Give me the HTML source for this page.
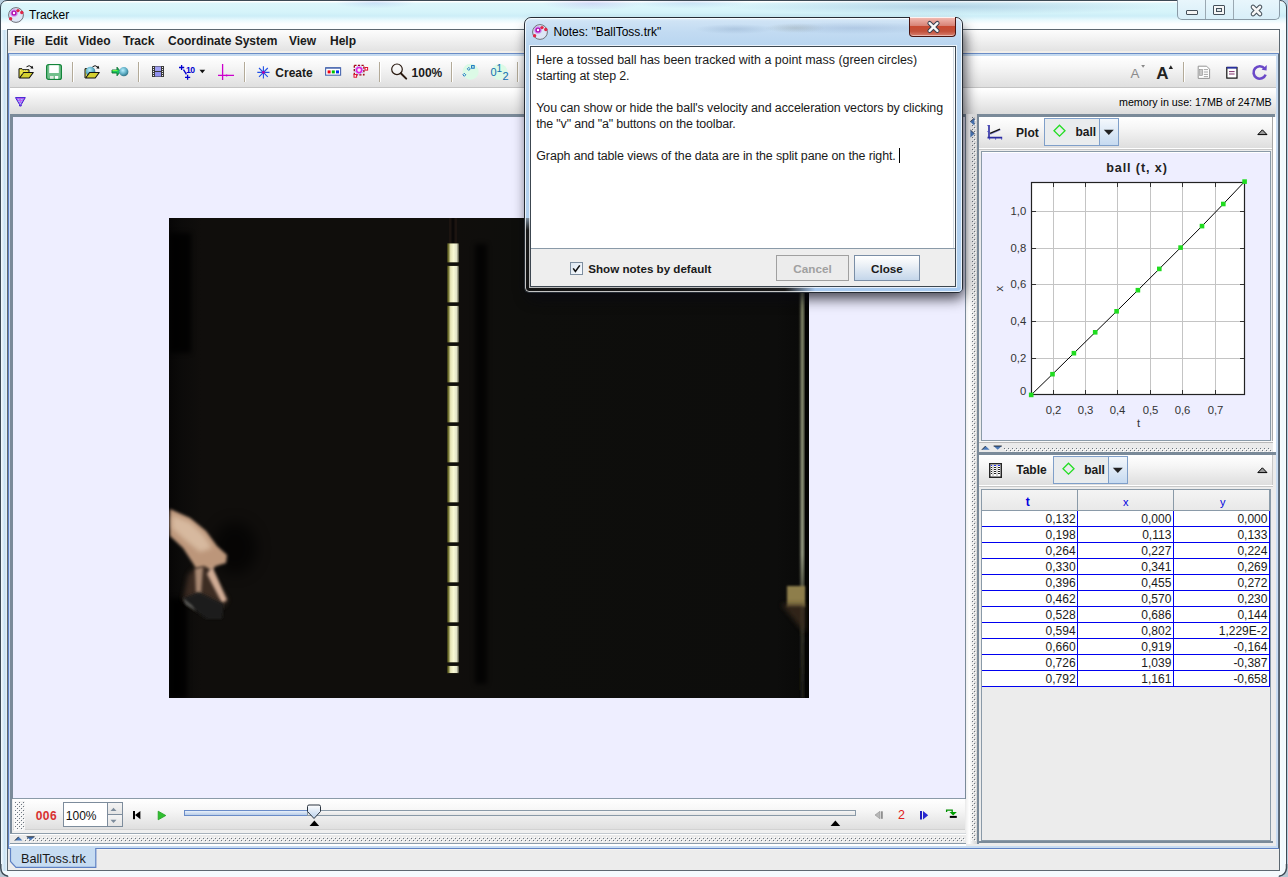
<!DOCTYPE html><html><head><meta charset="utf-8"><style>
*{margin:0;padding:0;box-sizing:border-box}
html,body{width:1288px;height:877px;overflow:hidden;background:#b8cfe0;font-family:"Liberation Sans",sans-serif;color:#000}
.a{position:absolute}
.t{position:absolute;white-space:pre;line-height:1}
svg{overflow:visible}
</style></head><body><div class="a" style="left:0px;top:0px;width:1287px;height:885px;border:1px solid #3d4a55;border-radius:7px 7px 0 0;background:linear-gradient(180deg,#ffffff 0,#ffffff 1px,#dcf6fb 2px,#d6f4fa 11px,#cdeef8 15px,#e8f9fd 19px,#fcfeff 23px,#f8fdff 60px,#eef8fc 100%)"></div>
<div class="a" style="left:1px;top:30px;width:6px;height:845px;background:linear-gradient(90deg,#f4fbff,#c9e2f3 60%,#e6f3fb)"></div>
<div class="a" style="left:1280px;top:30px;width:6px;height:845px;background:linear-gradient(90deg,#fafdff,#eef8fd 50%,#fafdff)"></div>
<div class="a" style="left:1px;top:871px;width:1285px;height:6px;background:#f4fafd"></div>
<div class="a" style="left:200px;top:1px;width:700px;height:8px;background:radial-gradient(ellipse 40px 6px at 25% 20%,rgba(140,160,230,.25),rgba(0,0,0,0)),radial-gradient(ellipse 50px 7px at 56% 30%,rgba(170,140,230,.25),rgba(0,0,0,0)),radial-gradient(ellipse 60px 6px at 70% 20%,rgba(120,150,220,.2),rgba(0,0,0,0))"></div>
<div class="a" style="left:720px;top:1px;width:450px;height:16px;background:radial-gradient(ellipse 220px 8px at 50% 35%,rgba(120,160,200,.38),rgba(120,160,200,0))"></div>
<svg class="a" style="left:8px;top:7px;" width="17" height="17" viewBox="0 0 17 17"><circle cx="8" cy="8" r="7.4" fill="#dde6f6" stroke="#707078" stroke-width="1"/><circle cx="6" cy="6" r="3.8" fill="#c850f0" opacity="0.55"/><circle cx="6" cy="6" r="2.6" fill="#b010b0"/><circle cx="6" cy="6" r="1.2" fill="#fff"/><circle cx="10" cy="3.6" r="1.7" fill="#e02848"/><circle cx="13.8" cy="5.5" r="1.7" fill="#e02848"/><circle cx="2.6" cy="11.7" r="1.7" fill="#e02848"/></svg>
<div class="t" style="left:29px;top:8.74px;font-size:12px;font-weight:normal;color:#000;">Tracker</div>
<div class="a" style="left:1177px;top:0;width:103px;height:20px;border:1px solid #8a9aa6;border-top:none;border-radius:0 0 5px 5px;background:linear-gradient(#e8f6fc,#d8eef8)"></div>
<div class="a" style="left:1205px;top:0px;width:1px;height:19px;background:#9aa8b2"></div>
<div class="a" style="left:1233px;top:0px;width:1px;height:19px;background:#9aa8b2"></div>
<div class="a" style="left:1186px;top:10px;width:12px;height:5px;border:1px solid #45505a;border-radius:1px;background:#f4f4f4"></div>
<div class="a" style="left:1213px;top:5px;width:12px;height:10px;border:1px solid #45505a;border-radius:1px;background:#f6f6f6"></div>
<div class="a" style="left:1216px;top:8px;width:6px;height:4px;border:1px solid #45505a;background:#dfe6ea"></div>
<svg class="a" style="left:1250px;top:5px;" width="13" height="11" viewBox="0 0 13 11"><path d="M3 2 L10 9 M10 2 L3 9" stroke="#45505a" stroke-width="4.6" stroke-linecap="round"/><path d="M3 2 L10 9 M10 2 L3 9" stroke="#f6f6f6" stroke-width="2.6" stroke-linecap="round"/></svg>
<svg class="a" style="left:0px;top:864px;" width="9" height="13" viewBox="0 0 9 13"><path d="M0 0 V13 H9 V12 Q1.5 12 1 4 V0 Z" fill="#b8c8d4"/><path d="M0.8 0 V4 Q1 11 8 12.2" fill="none" stroke="#3d4a55" stroke-width="1.5"/></svg>
<svg class="a" style="left:1278px;top:864px;" width="10" height="13" viewBox="0 0 10 13"><path d="M10 0 V13 H0 V12 Q7.5 12 8.2 4 V0 Z" fill="#b8c8d4"/><path d="M8.5 0 V4 Q8 11 1 12.2" fill="none" stroke="#3d4a55" stroke-width="1.5"/></svg>
<div class="a" style="left:7px;top:29px;width:1273px;height:842px;border:1px solid #5c6770;background:#ececec"></div>
<div class="a" style="left:8px;top:30px;width:1271px;height:21px;background:linear-gradient(#fdfdfd,#f3f3f3 40%,#e3e3e3)"></div>
<div class="a" style="left:8px;top:51px;width:1271px;height:2px;background:#f2efea"></div>
<div class="a" style="left:8px;top:53px;width:1271px;height:1px;background:#6a8cc6"></div>
<div class="t" style="left:14px;top:34.74px;font-size:12px;font-weight:bold;color:#1a1a1a;">File</div>
<div class="t" style="left:45px;top:34.74px;font-size:12px;font-weight:bold;color:#1a1a1a;">Edit</div>
<div class="t" style="left:78px;top:34.74px;font-size:12px;font-weight:bold;color:#1a1a1a;">Video</div>
<div class="t" style="left:123px;top:34.74px;font-size:12px;font-weight:bold;color:#1a1a1a;">Track</div>
<div class="t" style="left:168px;top:34.74px;font-size:12px;font-weight:bold;color:#1a1a1a;">Coordinate System</div>
<div class="t" style="left:289px;top:34.74px;font-size:12px;font-weight:bold;color:#1a1a1a;">View</div>
<div class="t" style="left:330px;top:34.74px;font-size:12px;font-weight:bold;color:#1a1a1a;">Help</div>
<div class="a" style="left:8px;top:54px;width:1271px;height:2px;background:#c6dbf0"></div>
<div class="a" style="left:8px;top:56px;width:1271px;height:31px;background:linear-gradient(#ffffff,#f6f6f6 35%,#dfdfdf)"></div>
<div class="a" style="left:8px;top:87px;width:1271px;height:1px;background:#c4c4c4"></div>
<div class="a" style="left:8px;top:88px;width:1271px;height:1px;background:#ffffff"></div>
<div class="a" style="left:8px;top:89px;width:1271px;height:25px;background:linear-gradient(#ffffff,#f1f1f1 40%,#dcdcdc)"></div>
<div class="t" style="left:1119px;top:97.14px;font-size:10.7px;font-weight:normal;color:#000;">memory in use: 17MB of 247MB</div>
<svg class="a" style="left:15px;top:97px;" width="11" height="10" viewBox="0 0 11 10"><path d="M0.5 0.6 H10.3 L6.2 7.6 V9 H4.6 V7.6 Z" fill="#c060f0" stroke="#3a20d0" stroke-width="1"/><path d="M3 2.5 H4 M6 2.5 H7.5 M3.5 4.5 H4.8 M6.2 4.5 H7 M4.8 6.5 H6" stroke="#80d8ff" stroke-width="1"/></svg>
<div class="a" style="left:72px;top:62px;width:1px;height:20px;background:#b3aa98"></div>
<div class="a" style="left:73px;top:62px;width:1px;height:20px;background:#ffffff"></div>
<div class="a" style="left:138px;top:62px;width:1px;height:20px;background:#b3aa98"></div>
<div class="a" style="left:139px;top:62px;width:1px;height:20px;background:#ffffff"></div>
<div class="a" style="left:244px;top:62px;width:1px;height:20px;background:#b3aa98"></div>
<div class="a" style="left:245px;top:62px;width:1px;height:20px;background:#ffffff"></div>
<div class="a" style="left:379px;top:62px;width:1px;height:20px;background:#b3aa98"></div>
<div class="a" style="left:380px;top:62px;width:1px;height:20px;background:#ffffff"></div>
<div class="a" style="left:451px;top:62px;width:1px;height:20px;background:#b3aa98"></div>
<div class="a" style="left:452px;top:62px;width:1px;height:20px;background:#ffffff"></div>
<div class="a" style="left:517px;top:62px;width:1px;height:20px;background:#b3aa98"></div>
<div class="a" style="left:518px;top:62px;width:1px;height:20px;background:#ffffff"></div>
<div class="a" style="left:1183px;top:62px;width:1px;height:20px;background:#b3aa98"></div>
<div class="a" style="left:1184px;top:62px;width:1px;height:20px;background:#ffffff"></div>
<svg class="a" style="left:18px;top:65px;" width="17" height="14" viewBox="0 0 17 14"><g transform="translate(0,2.5)"><path d="M1 10.5 V1.2 H4 L4.8 2.2 H11 V5" fill="#e8e040" stroke="#111" stroke-width="1"/><path d="M1.6 10.5 L5.6 5 H15.3 L11.2 10.5 Z" fill="#d4d030" stroke="#111" stroke-width="1.1" stroke-linejoin="round"/><path d="M2 2.5 l1 1 m0.5 1.5 l1 1 M6 3 h1 m1 0 h1" stroke="#fff8a0" stroke-width="0.6"/></g><path d="M8.5 1.8 Q11 -0.6 14 2.2" fill="none" stroke="#111" stroke-width="1"/><path d="M12.2 3.2 L15.3 3.8 L14.6 0.8 Z" fill="#111"/></svg>
<svg class="a" style="left:46px;top:64px;" width="16" height="16" viewBox="0 0 16 16"><rect x="0.6" y="0.6" width="14.8" height="14.8" rx="2" fill="#72c08c" stroke="#13843a" stroke-width="1.2"/><rect x="3.2" y="1.2" width="9.6" height="7.8" fill="#fff"/><rect x="4" y="12" width="3.6" height="2.8" fill="#e0e8e0"/><rect x="9" y="12" width="3.2" height="2.8" fill="#fff"/></svg>
<svg class="a" style="left:84px;top:65px;" width="17" height="14" viewBox="0 0 17 14"><g transform="translate(0,2.5)"><path d="M1 10.5 V1.2 H4 V5" fill="#e8e040" stroke="#111" stroke-width="1"/></g><defs><radialGradient id="sph" cx="0.4" cy="0.35" r="0.7"><stop offset="0" stop-color="#b8f0ff"/><stop offset="0.6" stop-color="#58a8c0"/><stop offset="1" stop-color="#2a6878"/></radialGradient></defs><circle cx="6.5" cy="6.5" r="4.8" fill="url(#sph)"/><g transform="translate(0,2.5)"><path d="M1.6 10.5 L5.6 5 H15.3 L11.2 10.5 Z" fill="#d4d030" stroke="#111" stroke-width="1.1" stroke-linejoin="round"/></g><path d="M8.5 1.8 Q11 -0.6 14 2.2" fill="none" stroke="#111" stroke-width="1"/><path d="M12.2 3.2 L15.3 3.8 L14.6 0.8 Z" fill="#111"/></svg>
<svg class="a" style="left:111px;top:66px;" width="18" height="12" viewBox="0 0 18 12"><path d="M1 4 H6 V1.2 L9.5 5.5 L6 9.8 V7 H1 Z" fill="#18c060" stroke="#0a7030" stroke-width="0.9"/><path d="M1.5 4.6 H6.5" stroke="#80ff40" stroke-width="1"/><circle cx="12.8" cy="5.7" r="4.6" fill="url(#sph)"/></svg>
<svg class="a" style="left:152px;top:66px;" width="13" height="12" viewBox="0 0 13 12"><rect x="0" y="0" width="12" height="11" fill="#3a3a3a"/><rect x="3" y="0.5" width="6" height="4.5" fill="#a0a0f4"/><rect x="3" y="6" width="6" height="4.5" fill="#9090ee"/><rect x="1" y="1" width="1" height="1" fill="#f0f0f0"/><rect x="10" y="1" width="1" height="1" fill="#f0f0f0"/><rect x="1" y="3" width="1" height="1" fill="#f0f0f0"/><rect x="10" y="3" width="1" height="1" fill="#f0f0f0"/><rect x="1" y="5" width="1" height="1" fill="#f0f0f0"/><rect x="10" y="5" width="1" height="1" fill="#f0f0f0"/><rect x="1" y="7" width="1" height="1" fill="#f0f0f0"/><rect x="10" y="7" width="1" height="1" fill="#f0f0f0"/><rect x="1" y="9" width="1" height="1" fill="#f0f0f0"/><rect x="10" y="9" width="1" height="1" fill="#f0f0f0"/></svg>
<svg class="a" style="left:178px;top:64px;" width="17" height="16" viewBox="0 0 17 16"><path d="M1 3.5 H6.2 M3.6 1 V6 M7 13.3 H12.2 M9.6 10.8 V15.8 M5.5 5.6 L8.4 10.4" stroke="#0000d0" stroke-width="1.3"/><text x="8" y="9.2" font-family="Liberation Sans" font-size="8.6" font-weight="bold" fill="#0000d0" letter-spacing="-0.6">10</text></svg>
<svg class="a" style="left:199px;top:69px;" width="7" height="5" viewBox="0 0 7 5"><path d="M0.5 0.8 H6.2 L3.35 4.2 Z" fill="#111"/></svg>
<svg class="a" style="left:217px;top:63px;" width="18" height="18" viewBox="0 0 18 18"><path d="M5.6 1 V17 M1 12.4 H17" stroke="#cc00cc" stroke-width="1.3"/><circle cx="9.6" cy="12.4" r="1" fill="#cc00cc"/></svg>
<svg class="a" style="left:257px;top:66px;" width="13" height="13" viewBox="0 0 13 13"><path d="M6.4 0.3 V12.5 M0.3 6.4 H12.5 M2 2 L10.8 10.8 M10.8 2 L2 10.8" stroke="#2050e8" stroke-width="1.1"/><circle cx="6.4" cy="6.4" r="1.4" fill="#c000a0"/></svg>
<div class="t" style="left:275.3px;top:66.54px;font-size:12px;font-weight:bold;color:#1a1a1a;">Create</div>
<svg class="a" style="left:325px;top:67px;" width="17" height="9" viewBox="0 0 17 9"><rect x="0.6" y="0.8" width="15" height="7.4" fill="#fff" stroke="#4a68b0" stroke-width="1.1"/><rect x="0.6" y="0.3" width="15" height="1.3" fill="#4a68b0"/><rect x="2.6" y="3.4" width="3" height="3" fill="#f00010"/><rect x="6.8" y="3.4" width="3" height="3" fill="#00c000"/><rect x="11" y="3.4" width="3" height="3" fill="#0030f0"/></svg>
<svg class="a" style="left:353px;top:64px;" width="16" height="14" viewBox="0 0 16 14"><rect x="1.3" y="1.3" width="9.6" height="9.6" fill="none" stroke="#a00010" stroke-width="1.3" stroke-dasharray="2.2 1.4"/><circle cx="6.1" cy="6.1" r="2.6" fill="none" stroke="#e020e0" stroke-width="1.6"/><circle cx="6.1" cy="6.1" r="4" fill="none" stroke="#6040f0" stroke-width="0.6" stroke-dasharray="1 1"/><rect x="12" y="3.5" width="2.6" height="2.6" fill="#fff" stroke="#e01030" stroke-width="1"/><rect x="1" y="10.6" width="2.6" height="2.6" fill="#fff" stroke="#e01030" stroke-width="1"/></svg>
<svg class="a" style="left:390px;top:63px;" width="18" height="18" viewBox="0 0 18 18"><circle cx="7" cy="6.3" r="5.3" fill="#fff" fill-opacity="0.2" stroke="#2a1a10" stroke-width="1.2"/><path d="M10.8 10.2 L16.2 15.6" stroke="#2a1a10" stroke-width="2" stroke-linecap="round"/></svg>
<div class="t" style="left:411.6px;top:67.24px;font-size:12px;font-weight:bold;color:#1a1a1a;">100%</div>
<svg class="a" style="left:462px;top:63px;" width="18" height="18" viewBox="0 0 18 18"><circle cx="8.6" cy="8.7" r="8" fill="#dcfae6"/><path d="M2.3 10.3 L3.8 11.8 L2.3 13.3 L0.8 11.8 Z M6.8 4.4 L8.3 5.9 L6.8 7.4 L5.3 5.9 Z" fill="none" stroke="#1070c0" stroke-width="0.9"/><rect x="9.6" y="2.6" width="2.6" height="2.6" fill="none" stroke="#1070c0" stroke-width="1"/></svg>
<svg class="a" style="left:489px;top:63px;" width="20" height="18" viewBox="0 0 20 18"><circle cx="10.5" cy="9" r="8" fill="#dcfae6"/><text x="1.5" y="13.3" font-family="Liberation Sans" font-size="11" fill="#1070b0">0</text><text x="7.6" y="8.6" font-family="Liberation Sans" font-size="10" fill="#1070b0">1</text><text x="13.6" y="16.6" font-family="Liberation Sans" font-size="11" fill="#1070b0">2</text></svg>
<svg class="a" style="left:1130px;top:64px;" width="16" height="16" viewBox="0 0 16 16"><text x="0.6" y="14.1" font-family="Liberation Sans" font-size="13.4" fill="#8a8a8a">A</text><path d="M11.2 1 H15 L13.1 3.8 Z" fill="#888"/></svg>
<svg class="a" style="left:1156px;top:64px;" width="18" height="16" viewBox="0 0 18 16"><text x="0.2" y="14.6" font-family="Liberation Sans" font-size="17" font-weight="bold" fill="#222">A</text><path d="M12.6 5 H17 L14.8 1.2 Z" fill="#222"/></svg>
<svg class="a" style="left:1197px;top:65px;" width="14" height="15" viewBox="0 0 14 15"><path d="M1.2 1.2 H9.6 L12.6 4.2 V13.4 H1.2 Z" fill="#fff" stroke="#8a8a8a" stroke-width="0.9"/><rect x="2.6" y="4.4" width="3" height="6" fill="#c8c8c8" stroke="#909090" stroke-width="0.6"/><path d="M6.8 4.6 H11 M6.8 7 H11 M6.8 9.4 H11 M6.8 11.6 H11" stroke="#909090" stroke-width="0.8"/></svg>
<svg class="a" style="left:1226px;top:66px;" width="12" height="13" viewBox="0 0 12 13"><rect x="0.8" y="1.5" width="10.2" height="10.6" fill="#fff" stroke="#111" stroke-width="1.2"/><rect x="0.8" y="0.8" width="10.2" height="1.8" fill="#2830a0"/><path d="M3 5.6 H8.6 M3 8 H8.6" stroke="#80306a" stroke-width="1"/></svg>
<svg class="a" style="left:1251px;top:64px;" width="18" height="17" viewBox="0 0 18 17"><path d="M13.6 4.6 A6.2 6.2 0 1 0 14.6 10.6" fill="none" stroke="#6a48c8" stroke-width="2.6"/><path d="M10.6 5.8 L15.6 6.4 L15.8 1 Z" fill="#6a48c8"/></svg>
<div class="a" style="left:10px;top:114px;width:956px;height:685px;background:#eeeeff"></div>
<div class="a" style="left:10px;top:114px;width:956px;height:3px;background:#7a8a99"></div>
<div class="a" style="left:10px;top:114px;width:3px;height:685px;background:#7a8a99"></div>
<div class="a" style="left:10px;top:798px;width:2px;height:36px;background:#7a8a99"></div>
<div class="a" style="left:965px;top:114px;width:1px;height:685px;background:#7a8a99"></div>
<svg class="a" style="left:169px;top:218px;overflow:hidden" width="640" height="480" viewBox="0 0 640 480"><g><defs><filter id="bl1" x="-50%" y="-50%" width="200%" height="200%"><feGaussianBlur stdDeviation="1.2"/></filter><filter id="bl2" x="-50%" y="-50%" width="200%" height="200%"><feGaussianBlur stdDeviation="2.5"/></filter><filter id="bl6" x="-50%" y="-50%" width="200%" height="200%"><feGaussianBlur stdDeviation="7"/></filter><linearGradient id="vbg" x1="0" y1="0" x2="1" y2="0"><stop offset="0" stop-color="#070606"/><stop offset="0.02" stop-color="#0c0b0a"/><stop offset="0.05" stop-color="#100e0c"/><stop offset="0.45" stop-color="#100e0c"/><stop offset="0.55" stop-color="#0e0e0c"/><stop offset="0.95" stop-color="#0d0d0c"/><stop offset="1" stop-color="#090908"/></linearGradient><linearGradient id="stk" x1="0" y1="0" x2="1" y2="0"><stop offset="0" stop-color="#2e2e10"/><stop offset="0.12" stop-color="#70702e"/><stop offset="0.3" stop-color="#e6e4b8"/><stop offset="0.55" stop-color="#f8f8d4"/><stop offset="0.8" stop-color="#e2e2c8"/><stop offset="1" stop-color="#4a4a3a"/></linearGradient></defs><rect x="0" y="0" width="640" height="480" fill="url(#vbg)"/><rect x="0" y="15" width="22" height="120" fill="#040404" opacity="0.8" filter="url(#bl2)"/><rect x="0" y="380" width="18" height="100" fill="#050505" opacity="0.9" filter="url(#bl2)"/><rect x="306" y="26" width="12" height="440" fill="#050505" opacity="0.75" filter="url(#bl2)"/><rect x="280" y="0" width="8" height="26" fill="#1c1410"/><rect x="282.5" y="0" width="3" height="26" fill="#0a0808"/><rect x="278" y="25.0" width="12" height="19.7" fill="#2a2818"/><rect x="278" y="25.5" width="12" height="18.7" rx="1" fill="url(#stk)"/><rect x="278" y="47.5" width="12" height="37.2" fill="#2a2818"/><rect x="278" y="48.0" width="12" height="36.2" rx="1" fill="url(#stk)"/><rect x="278" y="87.5" width="12" height="37.2" fill="#2a2818"/><rect x="278" y="88.0" width="12" height="36.2" rx="1" fill="url(#stk)"/><rect x="278" y="127.5" width="12" height="37.2" fill="#2a2818"/><rect x="278" y="128.0" width="12" height="36.2" rx="1" fill="url(#stk)"/><rect x="278" y="167.5" width="12" height="37.2" fill="#2a2818"/><rect x="278" y="168.0" width="12" height="36.2" rx="1" fill="url(#stk)"/><rect x="278" y="207.5" width="12" height="37.2" fill="#2a2818"/><rect x="278" y="208.0" width="12" height="36.2" rx="1" fill="url(#stk)"/><rect x="278" y="247.5" width="12" height="37.2" fill="#2a2818"/><rect x="278" y="248.0" width="12" height="36.2" rx="1" fill="url(#stk)"/><rect x="278" y="287.5" width="12" height="37.2" fill="#2a2818"/><rect x="278" y="288.0" width="12" height="36.2" rx="1" fill="url(#stk)"/><rect x="278" y="327.5" width="12" height="37.2" fill="#2a2818"/><rect x="278" y="328.0" width="12" height="36.2" rx="1" fill="url(#stk)"/><rect x="278" y="367.5" width="12" height="37.2" fill="#2a2818"/><rect x="278" y="368.0" width="12" height="36.2" rx="1" fill="url(#stk)"/><rect x="278" y="407.5" width="12" height="37.2" fill="#2a2818"/><rect x="278" y="408.0" width="12" height="36.2" rx="1" fill="url(#stk)"/><rect x="278" y="447.5" width="12" height="8.0" fill="#2a2818"/><rect x="278" y="448.0" width="12" height="7.0" rx="1" fill="url(#stk)"/><linearGradient id="rl" x1="0" y1="0" x2="0" y2="1"><stop offset="0" stop-color="#4a4a34"/><stop offset="0.15" stop-color="#7c8062"/><stop offset="0.7" stop-color="#9aa086"/><stop offset="0.8" stop-color="#3a3a2c"/><stop offset="1" stop-color="#1a1a16"/></linearGradient><rect x="631.5" y="0" width="3.6" height="480" fill="url(#rl)" filter="url(#bl1)"/><rect x="636" y="0" width="4" height="480" fill="#040403"/><rect x="618" y="368" width="18" height="21" fill="#8e7e4c" filter="url(#bl1)"/><path d="M612 386 L636 386 L636 415 Z" fill="#3a2c1c" opacity="0.8" filter="url(#bl2)"/><ellipse cx="66" cy="330" rx="22" ry="26" fill="#000" opacity="0.6" filter="url(#bl6)"/><filter id="bh" x="-50%" y="-50%" width="200%" height="200%"><feGaussianBlur stdDeviation="1.8"/></filter><path d="M34.0 342.0 L59.0 382.0 L55.0 388.0 L31.0 392.0 L14.0 382.0 L19.0 357.0 Z" fill="#5a4030" opacity="0.6" filter="url(#bl2)"/><path d="M1.0 291.0 L21.0 300.0 L37.0 313.0 L48.0 328.0 L58.0 337.0 L57.0 345.0 L47.0 348.0 L42.0 352.0 L35.0 348.0 L27.0 350.0 L14.0 330.0 L1.0 318.0 Z" fill="#bc967a" filter="url(#bh)"/><path d="M3.0 297.0 L21.0 304.0 L35.0 317.0 L43.0 330.0 L31.0 334.0 L16.0 322.0 L3.0 310.0 Z" fill="#dcc0a6" opacity="0.85" filter="url(#bl2)"/><path d="M43.0 348.0 L58.0 382.0 L53.0 385.0 L38.0 356.0 Z" fill="#d0ac94" filter="url(#bh)"/><path d="M34.0 349.0 L32.0 376.0 L27.0 375.0 L26.0 351.0 Z" fill="#a88872" filter="url(#bh)"/><path d="M14.0 380.0 L30.0 374.0 L55.0 386.0 L53.0 401.0 L38.0 401.0 L15.0 385.0 Z" fill="#1e1e1c" filter="url(#bh)"/><path d="M14.0 380.0 L23.0 387.0 L27.0 393.0 L17.0 387.0 Z" fill="#7a7a76" opacity="0.6" filter="url(#bl1)"/></g></svg>
<div class="a" style="left:13px;top:799px;width:952px;height:30px;background:linear-gradient(#ffffff,#f7f7f7 35%,#dfdfdf)"></div>
<div class="a" style="left:13px;top:798px;width:952px;height:1px;background:#8a9aa8"></div>
<div class="a" style="left:13px;top:829px;width:952px;height:1px;background:#d2d2d2"></div>
<div class="a" style="left:13px;top:830px;width:952px;height:3px;background:#f0f0f0"></div>
<div class="a" style="left:10px;top:833px;width:956px;height:1px;background:linear-gradient(90deg,#8a9aa8,#b4bcc4 30%,#d4d8dc)"></div>
<div class="a" style="left:10px;top:834px;width:956px;height:1px;background:#ffffff"></div>
<div class="a" style="left:14px;top:801px;width:11px;height:30px;background:linear-gradient(90deg,#fafafa,#f0f0f0)"></div>
<svg class="a" style="left:15px;top:802px" width="10" height="28"><defs><pattern id="dp1" x="0" y="0" width="4" height="4" patternUnits="userSpaceOnUse"><rect x="1" y="1" width="1" height="1" fill="#fff"/><rect x="3" y="3" width="1" height="1" fill="#fff"/><rect x="0" y="0" width="1" height="1" fill="#6a747e"/><rect x="2" y="2" width="1" height="1" fill="#6a747e"/></pattern></defs><rect width="10" height="28" fill="url(#dp1)"/></svg>
<div class="t" style="left:35.7px;top:810.44px;font-size:12px;font-weight:bold;color:#d83030;letter-spacing:0.45px">006</div>
<div class="a" style="left:63px;top:802px;width:45px;height:25px;background:#fff;border:1px solid #7d8c9c"></div>
<div class="t" style="left:65.8px;top:809.74px;font-size:12px;font-weight:normal;color:#111;">100%</div>
<div class="a" style="left:107px;top:802px;width:16px;height:13px;background:linear-gradient(#f4f4f4,#e4e4e4);border:1px solid #7d8c9c"></div>
<div class="a" style="left:107px;top:814px;width:16px;height:13px;background:linear-gradient(#f4f4f4,#e4e4e4);border:1px solid #7d8c9c"></div>
<svg class="a" style="left:110px;top:807px;" width="8" height="5" viewBox="0 0 8 5"><path d="M0.5 4 H6.5 L3.5 0.8 Z" fill="#7d8c9c"/></svg>
<svg class="a" style="left:110px;top:819px;" width="8" height="5" viewBox="0 0 8 5"><path d="M0.5 0.8 H6.5 L3.5 4 Z" fill="#7d8c9c"/></svg>
<svg class="a" style="left:132px;top:810px;" width="10" height="11" viewBox="0 0 10 11"><rect x="1" y="1" width="2" height="8.2" fill="#000"/><path d="M8.4 1 V9.2 L3 5.1 Z" fill="#000"/></svg>
<svg class="a" style="left:157px;top:810px;" width="11" height="11" viewBox="0 0 11 11"><path d="M1.2 1.2 V9.8 L8.8 5.5 Z" fill="#30c030" stroke="#20a020" stroke-width="0.8"/></svg>
<div class="a" style="left:184px;top:810px;width:124px;height:6px;background:linear-gradient(#e8f0fa,#b8cde8);border:1px solid #6a8cc8"></div>
<div class="a" style="left:307px;top:810px;width:549px;height:6px;background:linear-gradient(#f6f6f6,#e6e6e6);border:1px solid #8a9aa8"></div>
<svg class="a" style="left:306px;top:804px;" width="17" height="17" viewBox="0 0 17 17"><defs><linearGradient id="th" x1="0" y1="0" x2="0" y2="1"><stop offset="0" stop-color="#fff"/><stop offset="1" stop-color="#b8cfea"/></linearGradient></defs><path d="M1.5 2.5 Q1.5 1 3 1 H13 Q14.5 1 14.5 2.5 V7.5 L8 14.5 L1.5 7.5 Z" fill="url(#th)" stroke="#2a3440" stroke-width="1"/></svg>
<svg class="a" style="left:309px;top:820px;" width="11" height="7" viewBox="0 0 11 7"><path d="M0.6 6 H10.2 L5.4 0.6 Z" fill="#000"/></svg>
<svg class="a" style="left:830px;top:820px;" width="11" height="7" viewBox="0 0 11 7"><path d="M0.6 6 H10.2 L5.4 0.6 Z" fill="#000"/></svg>
<svg class="a" style="left:874px;top:810px;" width="10" height="11" viewBox="0 0 10 11"><path d="M6 1.3 V8.8 L1 5 Z" fill="#b8b8b8" stroke="#909090" stroke-width="0.6"/><rect x="7" y="1.3" width="1.8" height="7.5" fill="#909090"/></svg>
<div class="t" style="left:898.0px;top:809.42px;font-size:12.5px;font-weight:normal;color:#e02020;">2</div>
<svg class="a" style="left:919px;top:810px;" width="11" height="11" viewBox="0 0 11 11"><rect x="1" y="1" width="2" height="8.5" fill="#2020c0"/><path d="M4 1 V9.5 L9.2 5.25 Z" fill="#2828d0"/></svg>
<svg class="a" style="left:945px;top:809px;" width="13" height="10" viewBox="0 0 13 10"><path d="M1.6 3 V1.2 H7.2 V3.4" fill="none" stroke="#009000" stroke-width="1.3"/><path d="M4.5 3 H11.8 L8.15 6.6 Z" fill="#00a000"/><rect x="4.8" y="6.9" width="7" height="2" fill="#000"/></svg>
<div class="a" style="left:10px;top:835px;width:956px;height:8px;background:#eaeaea"></div>
<svg class="a" style="left:24px;top:837px" width="941" height="5"><defs><pattern id="dp2" x="3" y="1" width="4" height="4" patternUnits="userSpaceOnUse"><rect x="1" y="1" width="1" height="1" fill="#fff"/><rect x="3" y="3" width="1" height="1" fill="#fff"/><rect x="0" y="0" width="1" height="1" fill="#6a747e"/><rect x="2" y="2" width="1" height="1" fill="#6a747e"/></pattern></defs><rect width="941" height="5" fill="url(#dp2)"/></svg>
<svg class="a" style="left:14px;top:836px;" width="22" height="6" viewBox="0 0 22 6"><path d="M0.8 4.6 L4.6 0.8 L8.4 4.6 Z" fill="#4a78b8"/><path d="M12.6 0.8 H20.6 L16.6 4.6 Z" fill="#4a78b8"/><path d="M0.8 4.6 L4.6 0.8" stroke="#111" stroke-width="0.8"/><path d="M12.6 0.8 H20.6" stroke="#111" stroke-width="0.8"/></svg>
<div class="a" style="left:10px;top:843px;width:956px;height:1px;background:#8a9aa8"></div>
<div class="a" style="left:10px;top:844px;width:956px;height:2px;background:#ffffff"></div>
<div class="a" style="left:966px;top:114px;width:11px;height:730px;background:linear-gradient(90deg,#f0f0f0,#ffffff 30%,#e4e4e4 70%,#d8d8d8)"></div>
<svg class="a" style="left:971px;top:117px" width="5" height="724"><defs><pattern id="dp3" x="1" y="0" width="4" height="4" patternUnits="userSpaceOnUse"><rect x="1" y="1" width="1" height="1" fill="#fff"/><rect x="3" y="3" width="1" height="1" fill="#fff"/><rect x="0" y="0" width="1" height="1" fill="#6a747e"/><rect x="2" y="2" width="1" height="1" fill="#6a747e"/></pattern></defs><rect width="5" height="724" fill="url(#dp3)"/></svg>
<svg class="a" style="left:969px;top:117px;" width="7" height="22" viewBox="0 0 7 22"><path d="M5.4 1 V8.4 L1.2 4.7 Z" fill="#4a78b8"/><path d="M1.4 13 V20.6 L5.6 16.8 Z" fill="#4a78b8"/><path d="M5.4 1 L1.2 4.7 M1.4 13 L5.6 16.8" stroke="#223" stroke-width="0.7"/></svg>
<div class="a" style="left:977px;top:114px;width:302px;height:730px;background:#ececec"></div>
<div class="a" style="left:977px;top:114px;width:2px;height:730px;background:#7a8a99"></div>
<div class="a" style="left:977px;top:114px;width:298px;height:3px;background:#7a8a99"></div>
<div class="a" style="left:979px;top:117px;width:294px;height:31px;background:linear-gradient(#ffffff,#f6f6f6 35%,#dedede);border-right:1px solid #c8c8c8"></div>
<div class="a" style="left:979px;top:148px;width:294px;height:1px;background:#ffffff"></div>
<div class="a" style="left:979px;top:149px;width:294px;height:1px;background:#c8c8c8"></div>
<svg class="a" style="left:986px;top:123px;" width="18" height="18" viewBox="0 0 18 18"><path d="M4.6 2.5 L14.6 7.2" transform="translate(0,0)" stroke="none"/><path d="M4.2 11.2 L14.4 6.8" stroke="#8888e0" stroke-width="1.2"/><path d="M4 10.4 L14 6.1" stroke="#111" stroke-width="1.2"/><path d="M3 2 V15 M1.5 14.6 H16.2" stroke="#2a2aa0" stroke-width="1.6"/><path d="M1.4 2.6 H3 M1.4 8.6 H3 M3.6 15 V16.6 M9.6 15 V16.6 M15.6 15 V16.6" stroke="#4a4ac0" stroke-width="1"/></svg>
<div class="t" style="left:1016.1px;top:126.84px;font-size:12px;font-weight:bold;color:#1a1a1a;">Plot</div>
<div class="a" style="left:1044px;top:118px;width:75px;height:28px;background:#e9ecee;border:1px solid #7f9fc9"></div>
<div class="a" style="left:1099px;top:119px;width:19px;height:26px;background:linear-gradient(#f4f8fc,#c6daf0);border-left:1px solid #7f9fc9"></div>
<svg class="a" style="left:1053px;top:124px;" width="14" height="14" viewBox="0 0 14 14"><path d="M6.5 1.2 L12 6.7 L6.5 12.2 L1 6.7 Z" fill="none" stroke="#22dd22" stroke-width="1.3"/></svg>
<div class="t" style="left:1075.5px;top:125.54px;font-size:12px;font-weight:bold;color:#1a1a1a;">ball</div>
<svg class="a" style="left:1103px;top:129px;" width="12" height="7" viewBox="0 0 12 7"><path d="M0.8 0.8 H10.8 L5.8 6 Z" fill="#222"/></svg>
<svg class="a" style="left:1257px;top:129px;" width="11" height="7" viewBox="0 0 11 7"><path d="M0.8 5.6 H10 L5.4 0.8 Z" fill="#9a9a9a" stroke="#000" stroke-width="1"/></svg>
<div class="a" style="left:981px;top:151px;width:290px;height:290px;background:#eeeeff;border:1px solid #8a9aa8"></div>
<div class="a" style="left:1272px;top:117px;width:1px;height:325px;background:#a8a8a8"></div>
<div class="a" style="left:1273px;top:117px;width:3px;height:335px;background:#ffffff"></div>
<div class="a" style="left:982px;top:152px;width:288px;height:1px;background:#ffffff"></div>
<div class="a" style="left:979px;top:441px;width:294px;height:1px;background:#fafafa"></div>
<div class="a" style="left:979px;top:442px;width:294px;height:1px;background:#b8b8b8"></div>
<svg class="a" style="left:981px;top:151px" width="291" height="290" viewBox="981 151 291 290"><rect x="1031.5" y="182.5" width="213" height="212" fill="#fff"/><path d="M1053.5 183 V394" stroke="#c4c4c4" stroke-width="1"/><path d="M1053.5 183 V187 M1053.5 390 V394" stroke="#333" stroke-width="1"/><path d="M1085.5 183 V394" stroke="#c4c4c4" stroke-width="1"/><path d="M1085.5 183 V187 M1085.5 390 V394" stroke="#333" stroke-width="1"/><path d="M1117.5 183 V394" stroke="#c4c4c4" stroke-width="1"/><path d="M1117.5 183 V187 M1117.5 390 V394" stroke="#333" stroke-width="1"/><path d="M1150.5 183 V394" stroke="#c4c4c4" stroke-width="1"/><path d="M1150.5 183 V187 M1150.5 390 V394" stroke="#333" stroke-width="1"/><path d="M1182.5 183 V394" stroke="#c4c4c4" stroke-width="1"/><path d="M1182.5 183 V187 M1182.5 390 V394" stroke="#333" stroke-width="1"/><path d="M1215.5 183 V394" stroke="#c4c4c4" stroke-width="1"/><path d="M1215.5 183 V187 M1215.5 390 V394" stroke="#333" stroke-width="1"/><path d="M1032 358.5 H1244" stroke="#c4c4c4" stroke-width="1"/><path d="M1032 358.5 H1036 M1240 358.5 H1244" stroke="#333" stroke-width="1"/><path d="M1032 321.5 H1244" stroke="#c4c4c4" stroke-width="1"/><path d="M1032 321.5 H1036 M1240 321.5 H1244" stroke="#333" stroke-width="1"/><path d="M1032 284.5 H1244" stroke="#c4c4c4" stroke-width="1"/><path d="M1032 284.5 H1036 M1240 284.5 H1244" stroke="#333" stroke-width="1"/><path d="M1032 248.5 H1244" stroke="#c4c4c4" stroke-width="1"/><path d="M1032 248.5 H1036 M1240 248.5 H1244" stroke="#333" stroke-width="1"/><path d="M1032 211.5 H1244" stroke="#c4c4c4" stroke-width="1"/><path d="M1032 211.5 H1036 M1240 211.5 H1244" stroke="#333" stroke-width="1"/><rect x="1031.5" y="182.5" width="213" height="212" fill="none" stroke="#222" stroke-width="1.2"/><polyline points="1031.2,394.9 1052.5,374.2 1073.9,353.2 1095.2,332.3 1116.6,311.3 1137.9,290.2 1159.3,268.9 1180.6,247.6 1202.0,226.1 1223.3,204.0 1244.6,181.6" fill="none" stroke="#000" stroke-width="1"/><rect x="1028.9" y="392.6" width="4.6" height="4.6" fill="#20dc20"/><rect x="1050.2" y="371.9" width="4.6" height="4.6" fill="#20dc20"/><rect x="1071.6" y="350.9" width="4.6" height="4.6" fill="#20dc20"/><rect x="1092.9" y="330.0" width="4.6" height="4.6" fill="#20dc20"/><rect x="1114.3" y="309.0" width="4.6" height="4.6" fill="#20dc20"/><rect x="1135.6" y="287.9" width="4.6" height="4.6" fill="#20dc20"/><rect x="1157.0" y="266.6" width="4.6" height="4.6" fill="#20dc20"/><rect x="1178.3" y="245.3" width="4.6" height="4.6" fill="#20dc20"/><rect x="1199.7" y="223.8" width="4.6" height="4.6" fill="#20dc20"/><rect x="1221.0" y="201.7" width="4.6" height="4.6" fill="#20dc20"/><rect x="1242.3" y="179.3" width="4.6" height="4.6" fill="#20dc20"/><text x="1026.3" y="395.0" text-anchor="end" font-family="Liberation Sans" font-size="11.3" fill="#333">0</text><text x="1026.3" y="361.8" text-anchor="end" font-family="Liberation Sans" font-size="11.3" fill="#333">0,2</text><text x="1026.3" y="324.8" text-anchor="end" font-family="Liberation Sans" font-size="11.3" fill="#333">0,4</text><text x="1026.3" y="287.8" text-anchor="end" font-family="Liberation Sans" font-size="11.3" fill="#333">0,6</text><text x="1026.3" y="251.8" text-anchor="end" font-family="Liberation Sans" font-size="11.3" fill="#333">0,8</text><text x="1026.3" y="214.8" text-anchor="end" font-family="Liberation Sans" font-size="11.3" fill="#333">1,0</text><text x="1053.5" y="413.5" text-anchor="middle" font-family="Liberation Sans" font-size="11.3" fill="#333">0,2</text><text x="1085.5" y="413.5" text-anchor="middle" font-family="Liberation Sans" font-size="11.3" fill="#333">0,3</text><text x="1117.5" y="413.5" text-anchor="middle" font-family="Liberation Sans" font-size="11.3" fill="#333">0,4</text><text x="1150.5" y="413.5" text-anchor="middle" font-family="Liberation Sans" font-size="11.3" fill="#333">0,5</text><text x="1182.5" y="413.5" text-anchor="middle" font-family="Liberation Sans" font-size="11.3" fill="#333">0,6</text><text x="1215.5" y="413.5" text-anchor="middle" font-family="Liberation Sans" font-size="11.3" fill="#333">0,7</text><text x="1138.5" y="427.2" text-anchor="middle" font-family="Liberation Sans" font-size="11.3" fill="#333">t</text><text x="0" y="0" transform="translate(1003.4,288.6) rotate(-90)" text-anchor="middle" font-family="Liberation Sans" font-size="11.3" fill="#333">x</text><text x="1137" y="172" text-anchor="middle" font-family="Liberation Sans" font-size="12.6" font-weight="bold" letter-spacing="0.9" fill="#222">ball (t, x)</text></svg>
<div class="a" style="left:979px;top:443px;width:294px;height:9px;background:#eaeaea"></div>
<svg class="a" style="left:1004px;top:448px" width="268" height="4"><defs><pattern id="dp4" x="0" y="0" width="4" height="4" patternUnits="userSpaceOnUse"><rect x="1" y="1" width="1" height="1" fill="#fff"/><rect x="3" y="3" width="1" height="1" fill="#fff"/><rect x="0" y="0" width="1" height="1" fill="#6a747e"/><rect x="2" y="2" width="1" height="1" fill="#6a747e"/></pattern></defs><rect width="268" height="4" fill="url(#dp4)"/></svg>
<svg class="a" style="left:981px;top:445px;" width="22" height="6" viewBox="0 0 22 6"><path d="M0.8 4.8 L4.6 1 L8.6 4.8 Z" fill="#4a78b8"/><path d="M12.6 1 H20.8 L16.7 4.8 Z" fill="#4a78b8"/><path d="M0.8 4.8 L4.6 1" stroke="#111" stroke-width="0.8"/><path d="M12.6 1 H20.8" stroke="#111" stroke-width="0.8"/></svg>
<div class="a" style="left:979px;top:452px;width:297px;height:3px;background:#7a8a99"></div>
<div class="a" style="left:979px;top:455px;width:294px;height:30px;background:linear-gradient(#ffffff,#f6f6f6 35%,#dedede);border-right:1px solid #c8c8c8"></div>
<div class="a" style="left:979px;top:485px;width:294px;height:1px;background:#ffffff"></div>
<div class="a" style="left:979px;top:486px;width:294px;height:1px;background:#c8c8c8"></div>
<svg class="a" style="left:989px;top:463px;" width="13" height="15" viewBox="0 0 13 15"><rect x="0" y="0" width="13" height="15" fill="#262626"/><rect x="1.5" y="1.5" width="10" height="12" fill="#fff"/><rect x="1.5" y="1.5" width="10" height="0.6" fill="#b0b0a8"/><rect x="3.5" y="1.5" width="1" height="12" fill="#a8a8a8"/><rect x="7.5" y="1.5" width="1" height="12" fill="#a8a8a8"/><rect x="2" y="2" width="1" height="1" fill="#2030f0"/><rect x="5" y="2" width="2" height="1" fill="#2030f0"/><rect x="9" y="2" width="2" height="1" fill="#2030f0"/><rect x="2" y="4" width="1" height="1" fill="#222"/><rect x="5" y="4" width="2" height="1" fill="#222"/><rect x="9" y="4" width="2" height="1" fill="#222"/><rect x="2" y="6" width="1" height="1" fill="#222"/><rect x="5" y="6" width="2" height="1" fill="#222"/><rect x="9" y="6" width="2" height="1" fill="#222"/><rect x="2" y="8" width="1" height="1" fill="#222"/><rect x="5" y="8" width="2" height="1" fill="#222"/><rect x="9" y="8" width="2" height="1" fill="#222"/><rect x="2" y="10" width="1" height="1" fill="#222"/><rect x="5" y="10" width="2" height="1" fill="#222"/><rect x="9" y="10" width="2" height="1" fill="#222"/></svg>
<div class="t" style="left:1016.2px;top:464.44px;font-size:12px;font-weight:bold;color:#1a1a1a;">Table</div>
<div class="a" style="left:1053px;top:456px;width:75px;height:28px;background:#e9ecee;border:1px solid #7f9fc9"></div>
<div class="a" style="left:1108px;top:457px;width:19px;height:26px;background:linear-gradient(#f4f8fc,#c6daf0);border-left:1px solid #7f9fc9"></div>
<svg class="a" style="left:1062px;top:462px;" width="14" height="14" viewBox="0 0 14 14"><path d="M6.5 1.2 L12 6.7 L6.5 12.2 L1 6.7 Z" fill="none" stroke="#22dd22" stroke-width="1.3"/></svg>
<div class="t" style="left:1084.2px;top:463.64px;font-size:12px;font-weight:bold;color:#1a1a1a;">ball</div>
<svg class="a" style="left:1112px;top:467px;" width="12" height="7" viewBox="0 0 12 7"><path d="M0.8 0.8 H10.8 L5.8 6 Z" fill="#222"/></svg>
<svg class="a" style="left:1257px;top:467px;" width="11" height="7" viewBox="0 0 11 7"><path d="M0.8 5.6 H10 L5.4 0.8 Z" fill="#9a9a9a" stroke="#000" stroke-width="1"/></svg>
<div class="a" style="left:981px;top:489px;width:290px;height:352px;background:#ececec;border:1px solid #8a9aa8"></div>
<div class="a" style="left:982px;top:490px;width:288px;height:21px;background:linear-gradient(#f4f4f4,#e8e8e8)"></div>
<div class="a" style="left:982px;top:510px;width:288px;height:1px;background:#8a9aa8"></div>
<div class="a" style="left:1077px;top:490px;width:1px;height:21px;background:#8a9aa8"></div>
<div class="a" style="left:1173px;top:490px;width:1px;height:21px;background:#8a9aa8"></div>
<div class="a" style="left:1269px;top:490px;width:1px;height:21px;background:#8a9aa8"></div>
<div class="t" style="left:1025.8px;top:495.94px;font-size:12px;font-weight:bold;color:#0000e0;">t</div>
<div class="t" style="left:1123.0px;top:496.79px;font-size:11px;font-weight:normal;color:#0000e0;">x</div>
<div class="t" style="left:1220.0px;top:497.29px;font-size:11px;font-weight:normal;color:#0000e0;">y</div>
<div class="a" style="left:982px;top:511px;width:288px;height:176px;background:#fff"></div>
<div class="a" style="left:982px;top:526px;width:288px;height:1px;background:#0000f0"></div>
<div class="t" style="right:212.4px;top:512.94px;font-size:12px;color:#1a1a1a">0,132</div>
<div class="t" style="right:116.7px;top:512.94px;font-size:12px;color:#1a1a1a">0,000</div>
<div class="t" style="right:20.6px;top:512.94px;font-size:12px;color:#1a1a1a">0,000</div>
<div class="a" style="left:982px;top:542px;width:288px;height:1px;background:#0000f0"></div>
<div class="t" style="right:212.4px;top:528.94px;font-size:12px;color:#1a1a1a">0,198</div>
<div class="t" style="right:116.7px;top:528.94px;font-size:12px;color:#1a1a1a">0,113</div>
<div class="t" style="right:20.6px;top:528.94px;font-size:12px;color:#1a1a1a">0,133</div>
<div class="a" style="left:982px;top:558px;width:288px;height:1px;background:#0000f0"></div>
<div class="t" style="right:212.4px;top:544.94px;font-size:12px;color:#1a1a1a">0,264</div>
<div class="t" style="right:116.7px;top:544.94px;font-size:12px;color:#1a1a1a">0,227</div>
<div class="t" style="right:20.6px;top:544.94px;font-size:12px;color:#1a1a1a">0,224</div>
<div class="a" style="left:982px;top:574px;width:288px;height:1px;background:#0000f0"></div>
<div class="t" style="right:212.4px;top:560.94px;font-size:12px;color:#1a1a1a">0,330</div>
<div class="t" style="right:116.7px;top:560.94px;font-size:12px;color:#1a1a1a">0,341</div>
<div class="t" style="right:20.6px;top:560.94px;font-size:12px;color:#1a1a1a">0,269</div>
<div class="a" style="left:982px;top:590px;width:288px;height:1px;background:#0000f0"></div>
<div class="t" style="right:212.4px;top:576.94px;font-size:12px;color:#1a1a1a">0,396</div>
<div class="t" style="right:116.7px;top:576.94px;font-size:12px;color:#1a1a1a">0,455</div>
<div class="t" style="right:20.6px;top:576.94px;font-size:12px;color:#1a1a1a">0,272</div>
<div class="a" style="left:982px;top:606px;width:288px;height:1px;background:#0000f0"></div>
<div class="t" style="right:212.4px;top:592.94px;font-size:12px;color:#1a1a1a">0,462</div>
<div class="t" style="right:116.7px;top:592.94px;font-size:12px;color:#1a1a1a">0,570</div>
<div class="t" style="right:20.6px;top:592.94px;font-size:12px;color:#1a1a1a">0,230</div>
<div class="a" style="left:982px;top:622px;width:288px;height:1px;background:#0000f0"></div>
<div class="t" style="right:212.4px;top:608.94px;font-size:12px;color:#1a1a1a">0,528</div>
<div class="t" style="right:116.7px;top:608.94px;font-size:12px;color:#1a1a1a">0,686</div>
<div class="t" style="right:20.6px;top:608.94px;font-size:12px;color:#1a1a1a">0,144</div>
<div class="a" style="left:982px;top:638px;width:288px;height:1px;background:#0000f0"></div>
<div class="t" style="right:212.4px;top:624.94px;font-size:12px;color:#1a1a1a">0,594</div>
<div class="t" style="right:116.7px;top:624.94px;font-size:12px;color:#1a1a1a">0,802</div>
<div class="t" style="right:20.6px;top:624.94px;font-size:12px;color:#1a1a1a">1,229E-2</div>
<div class="a" style="left:982px;top:654px;width:288px;height:1px;background:#0000f0"></div>
<div class="t" style="right:212.4px;top:640.94px;font-size:12px;color:#1a1a1a">0,660</div>
<div class="t" style="right:116.7px;top:640.94px;font-size:12px;color:#1a1a1a">0,919</div>
<div class="t" style="right:20.6px;top:640.94px;font-size:12px;color:#1a1a1a">-0,164</div>
<div class="a" style="left:982px;top:670px;width:288px;height:1px;background:#0000f0"></div>
<div class="t" style="right:212.4px;top:656.94px;font-size:12px;color:#1a1a1a">0,726</div>
<div class="t" style="right:116.7px;top:656.94px;font-size:12px;color:#1a1a1a">1,039</div>
<div class="t" style="right:20.6px;top:656.94px;font-size:12px;color:#1a1a1a">-0,387</div>
<div class="a" style="left:982px;top:686px;width:288px;height:1px;background:#0000f0"></div>
<div class="t" style="right:212.4px;top:672.94px;font-size:12px;color:#1a1a1a">0,792</div>
<div class="t" style="right:116.7px;top:672.94px;font-size:12px;color:#1a1a1a">1,161</div>
<div class="t" style="right:20.6px;top:672.94px;font-size:12px;color:#1a1a1a">-0,658</div>
<div class="a" style="left:1077px;top:511px;width:1px;height:176px;background:#0000f0"></div>
<div class="a" style="left:1173px;top:511px;width:1px;height:176px;background:#0000f0"></div>
<div class="a" style="left:1269px;top:511px;width:1px;height:176px;background:#0000f0"></div>
<div class="a" style="left:979px;top:841px;width:294px;height:2px;background:#7a8a99"></div>
<div class="a" style="left:8px;top:846px;width:1271px;height:2px;background:#c8dcf2"></div>
<div class="a" style="left:8px;top:848px;width:1271px;height:1px;background:#5f82c4"></div>
<div class="a" style="left:8px;top:54px;width:2px;height:794px;background:linear-gradient(90deg,#5f82c4 50%,#c8dcf2 50%)"></div>
<div class="a" style="left:1276px;top:54px;width:2px;height:794px;background:#c8dcf2"></div>
<div class="a" style="left:1278px;top:54px;width:1px;height:794px;background:#5c6c80"></div>
<div class="a" style="left:8px;top:849px;width:1271px;height:21px;background:#ececec"></div>
<div class="a" style="left:96px;top:849px;width:1183px;height:1px;background:#f7f4ef"></div>
<svg class="a" style="left:9px;top:845px" width="90" height="25" viewBox="0 0 90 25"><path d="M1.5 0.5 V16.5 L7 22.4 H86.8 V3" fill="#c6dcf2" stroke="#5f82c4" stroke-width="1.2"/><path d="M0 0.5 H89" stroke="#fff" stroke-width="1"/></svg>
<div class="a" style="left:10px;top:846px;width:86px;height:2px;background:#c6dcf2"></div>
<div class="t" style="left:21px;top:852.75px;font-size:12.7px;font-weight:normal;color:#1a1a1a;">BallToss.trk</div>
<div class="a" style="left:527px;top:22px;width:434px;height:268px;border-radius:7px;box-shadow:2px 7px 13px 2px rgba(10,10,20,.72)"></div>
<div class="a" style="left:524px;top:17px;width:439px;height:276px;border:1px solid #262c34;border-radius:7px 7px 5px 5px;overflow:hidden;background:linear-gradient(180deg,#e4f0fa 0,#cfe3f5 3px,#c2dbf2 14px,#b9d5f0 28px,#b0cfee 100%)">
<div class="a" style="left:0;top:0;width:437px;height:28px;background:radial-gradient(ellipse 40px 5px at 210px 11px,rgba(90,120,160,.22),rgba(0,0,0,0)),radial-gradient(ellipse 30px 5px at 270px 10px,rgba(120,120,100,.2),rgba(0,0,0,0)),radial-gradient(ellipse 90px 6px at 330px 10px,rgba(90,120,170,.2),rgba(0,0,0,0))"></div>
<div class="a" style="left:0;top:200px;width:6px;height:76px;background:linear-gradient(#7a8a9a,#1a1a1a 12px,#141414)"></div>
<div class="a" style="left:0;top:269px;width:290px;height:8px;background:linear-gradient(90deg,#141414 0,#1a1a1a 260px,#a8c8ee 290px)"></div>
<div class="a" style="left:290px;top:269px;width:150px;height:8px;background:#a8caf0"></div>
<div class="a" style="left:0;top:0;width:437px;height:274px;border:1px solid rgba(255,255,255,.75);border-radius:6px 6px 4px 4px"></div>
</div>
<div class="a" style="left:529px;top:45px;width:428px;height:243px;border:1px solid rgba(255,255,255,.7)"></div>
<svg class="a" style="left:532px;top:24px;" width="17" height="17" viewBox="0 0 17 17"><circle cx="8" cy="8" r="7.4" fill="#dde6f6" stroke="#707078" stroke-width="1"/><circle cx="6" cy="6" r="3.8" fill="#c850f0" opacity="0.55"/><circle cx="6" cy="6" r="2.6" fill="#b010b0"/><circle cx="6" cy="6" r="1.2" fill="#fff"/><circle cx="10" cy="3.6" r="1.7" fill="#e02848"/><circle cx="13.8" cy="5.5" r="1.7" fill="#e02848"/><circle cx="2.6" cy="11.7" r="1.7" fill="#e02848"/></svg>
<div class="t" style="left:553.4px;top:26.24px;font-size:12px;font-weight:normal;color:#000;">Notes: "BallToss.trk"</div>
<div class="a" style="left:909px;top:17px;width:47px;height:20px;border:1px solid #4a1410;border-top:none;border-radius:0 0 4px 4px;background:linear-gradient(#f4c0b8 0,#e8a49a 20%,#d88478 45%,#c84a32 50%,#c2503a 75%,#d88070 100%);box-shadow:inset 0 1px 0 rgba(255,255,255,.8),inset 0 -1px 0 rgba(255,255,255,.45)"></div>
<svg class="a" style="left:927px;top:21px;" width="13" height="12" viewBox="0 0 13 12"><path d="M2.6 2.2 L10.4 9.8 M10.4 2.2 L2.6 9.8" stroke="#3a4050" stroke-width="4.4" stroke-linecap="round"/><path d="M2.6 2.2 L10.4 9.8 M10.4 2.2 L2.6 9.8" stroke="#f8f8f8" stroke-width="2.4" stroke-linecap="round"/></svg>
<div class="a" style="left:530px;top:46px;width:426px;height:241px;background:#eeeeee;border:1px solid #3c4650"></div>
<div class="a" style="left:531px;top:47px;width:424px;height:202px;background:#fff"></div>
<div class="a" style="left:531px;top:248px;width:424px;height:1px;background:#8a9aa8"></div>
<div class="a" style="left:953px;top:47px;width:1px;height:201px;background:#d4dce4"></div>
<div class="t" style="left:536.3px;top:53.56px;font-size:12.45px;font-weight:normal;color:#1a1a1a;letter-spacing:0px">Here a tossed ball has been tracked with a point mass (green circles)</div>
<div class="t" style="left:536.3px;top:69.56px;font-size:12.45px;font-weight:normal;color:#1a1a1a;letter-spacing:-0.12px">starting at step 2.</div>
<div class="t" style="left:536.3px;top:101.56px;font-size:12.45px;font-weight:normal;color:#1a1a1a;letter-spacing:-0.104px">You can show or hide the ball's velocity and acceleration vectors by clicking</div>
<div class="t" style="left:536.3px;top:117.56px;font-size:12.45px;font-weight:normal;color:#1a1a1a;letter-spacing:-0.167px">the "v" and "a" buttons on the toolbar.</div>
<div class="t" style="left:536.3px;top:149.56px;font-size:12.45px;font-weight:normal;color:#1a1a1a;letter-spacing:-0.113px">Graph and table views of the data are in the split pane on the right.</div>
<div class="a" style="left:899px;top:148px;width:1px;height:15px;background:#000"></div>
<div class="a" style="left:570px;top:262px;width:13px;height:13px;background:linear-gradient(135deg,#dce6f0,#f8fbff);border:1px solid #7d8ea0"></div>
<svg class="a" style="left:572px;top:264px;" width="9" height="9" viewBox="0 0 9 9"><path d="M1.2 4.4 L3.4 7.4 L7.8 1.4" fill="none" stroke="#111" stroke-width="1.6"/></svg>
<div class="t" style="left:588.3px;top:262.88px;font-size:11.6px;font-weight:bold;color:#1a1a1a;">Show notes by default</div>
<div class="a" style="left:776px;top:255px;width:73px;height:26px;background:#ececec;border:1px solid #a0a0a0"></div>
<div class="t" style="left:793.3px;top:262.80px;font-size:11.7px;font-weight:bold;color:#a0a0a0;">Cancel</div>
<div class="a" style="left:854px;top:255px;width:66px;height:26px;background:linear-gradient(#ffffff,#f0f4f8 30%,#c4d6ea);border:1px solid #7a8ea6"></div>
<div class="t" style="left:871.0px;top:262.80px;font-size:11.7px;font-weight:bold;color:#1a1a1a;">Close</div>
</body></html>
